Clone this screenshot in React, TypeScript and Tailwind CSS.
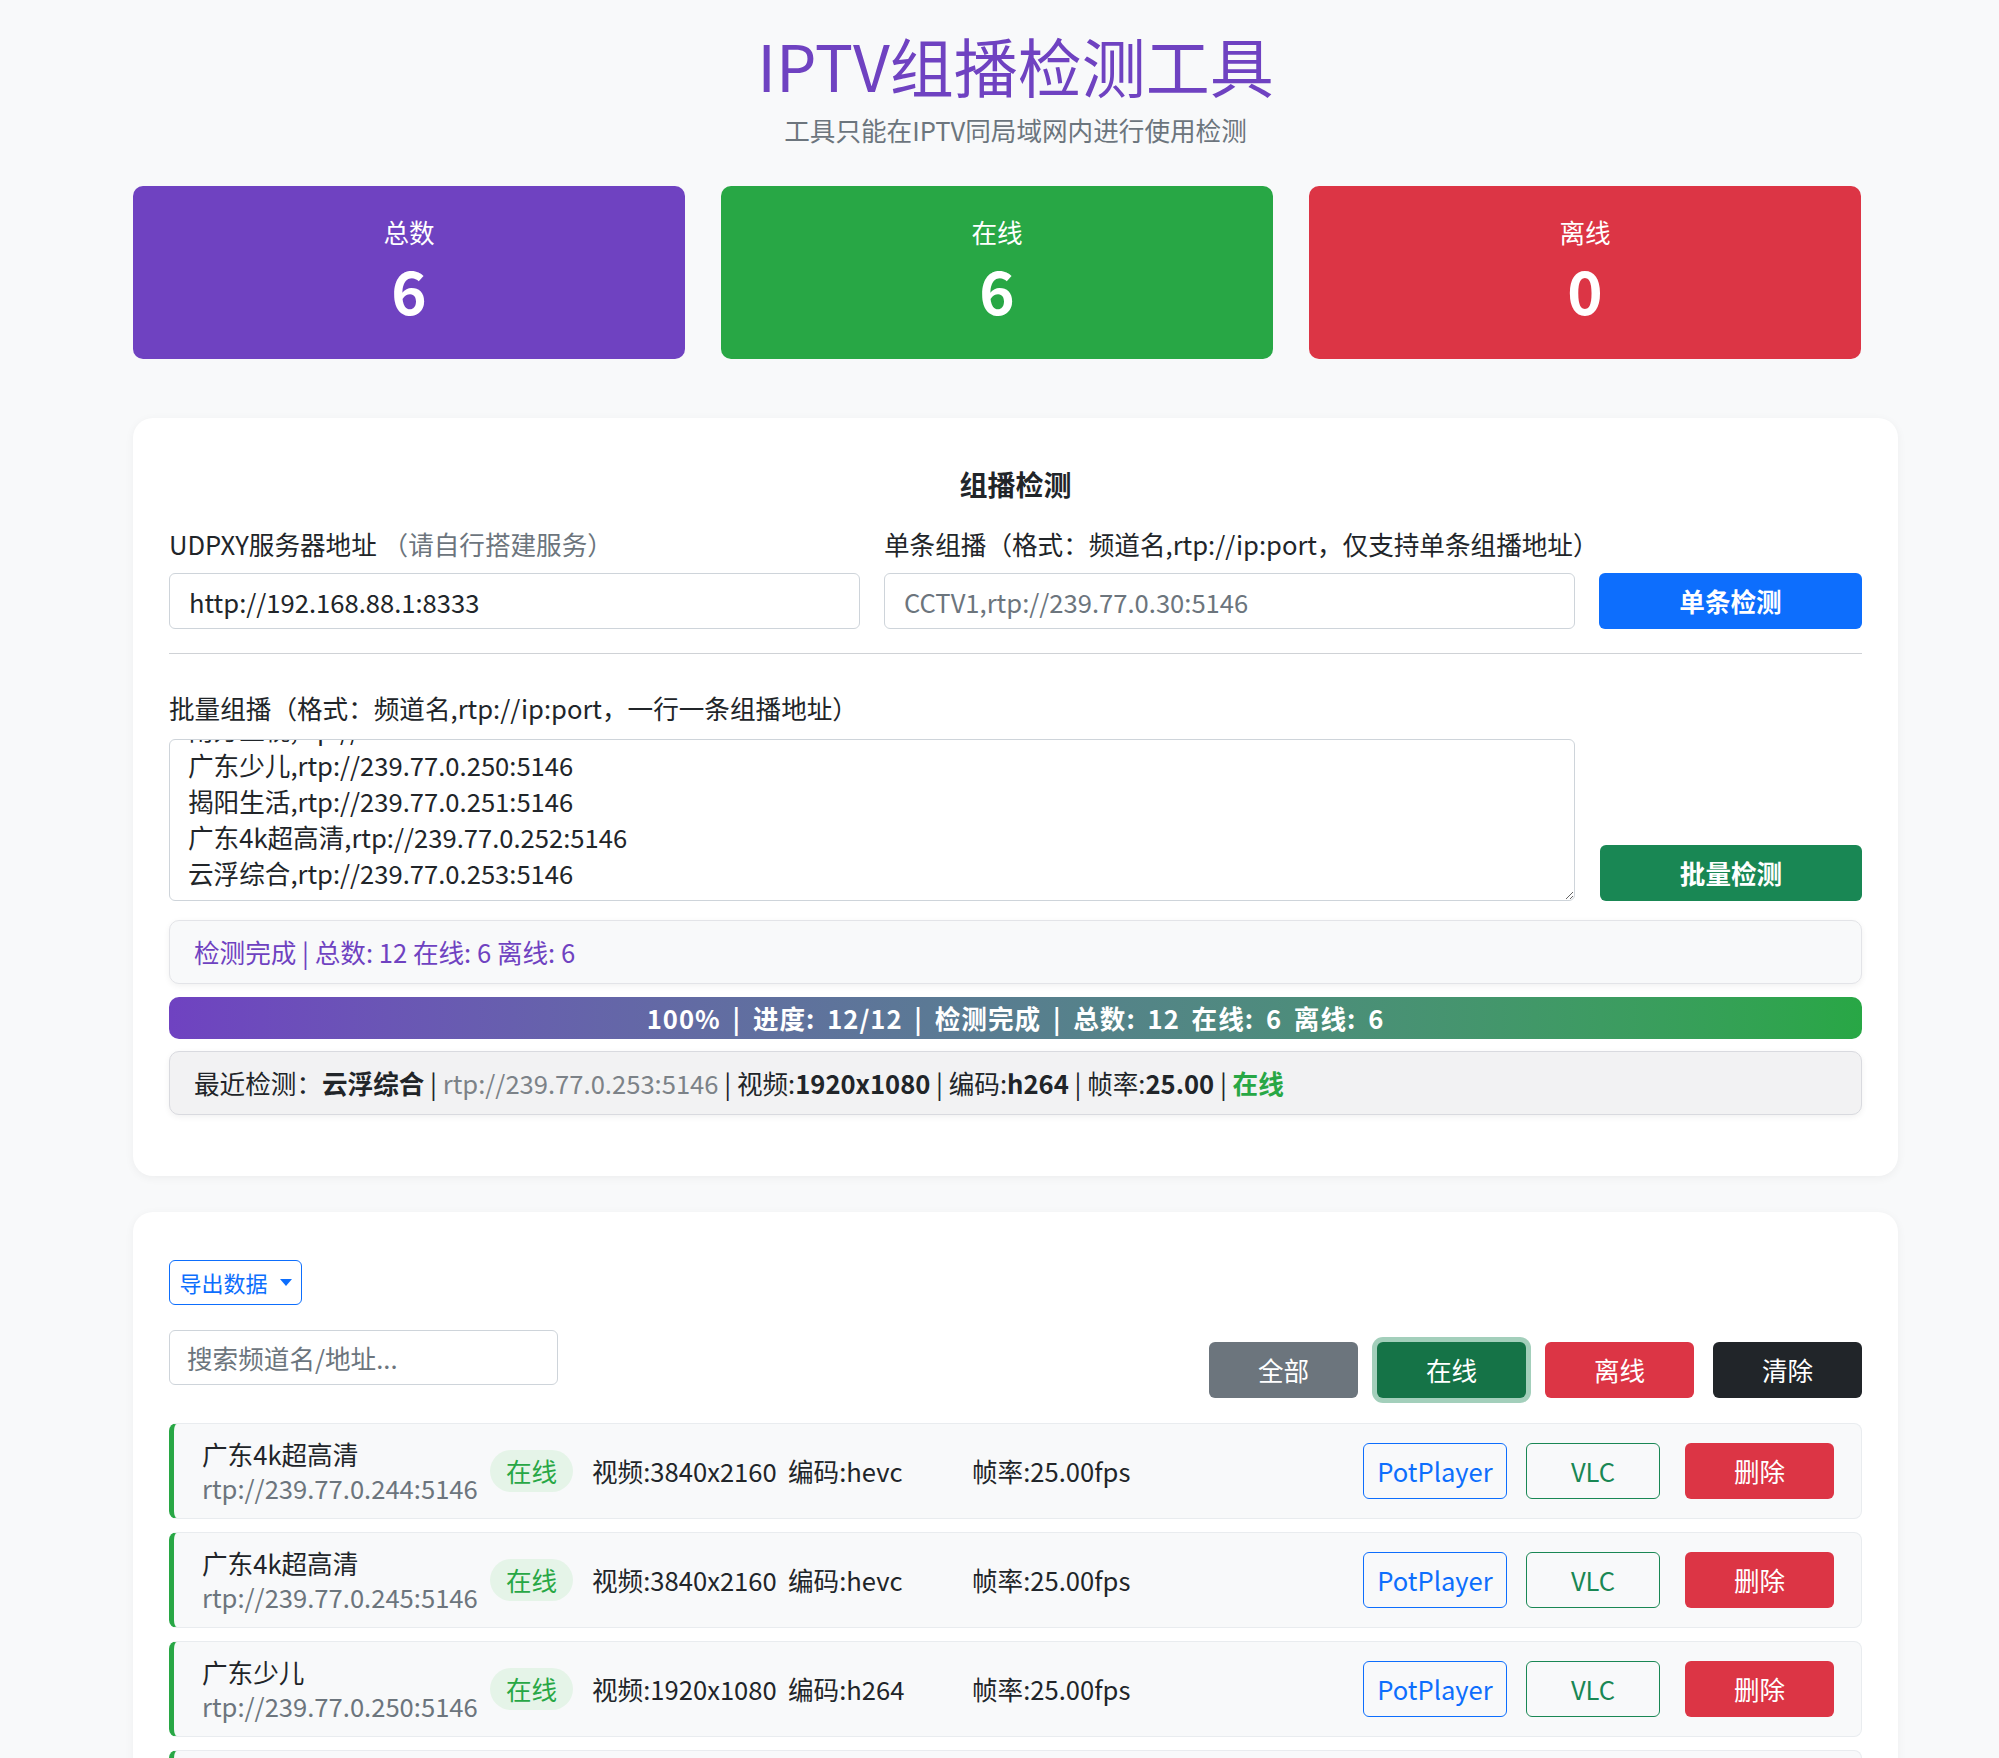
import { useEffect, useRef } from 'react'

const batchText = [
  '广东4k超高清,rtp://239.77.0.244:5146',
  '广东4k超高清,rtp://239.77.0.245:5146',
  '广东体育,rtp://239.77.0.246:5146',
  '广东珠江,rtp://239.77.0.247:5146',
  '广东新闻,rtp://239.77.0.248:5146',
  '嘉佳卡通,rtp://239.77.0.249:5146',
  '广东影视,rtp://239.77.0.240:5146',
  '南方卫视,rtp://239.77.0.241:5146',
  '广东少儿,rtp://239.77.0.250:5146',
  '揭阳生活,rtp://239.77.0.251:5146',
  '广东4k超高清,rtp://239.77.0.252:5146',
  '云浮综合,rtp://239.77.0.253:5146'
].join('\n')

const channels = [
  { name: '广东4k超高清', url: 'rtp://239.77.0.244:5146', res: '3840x2160', codec: 'hevc' },
  { name: '广东4k超高清', url: 'rtp://239.77.0.245:5146', res: '3840x2160', codec: 'hevc' },
  { name: '广东少儿', url: 'rtp://239.77.0.250:5146', res: '1920x1080', codec: 'h264' },
  { name: '揭阳生活', url: 'rtp://239.77.0.251:5146', res: '1920x1080', codec: 'h264' },
  { name: '广东4k超高清', url: 'rtp://239.77.0.252:5146', res: '3840x2160', codec: 'hevc' },
  { name: '云浮综合', url: 'rtp://239.77.0.253:5146', res: '1920x1080', codec: 'h264' }
]

const stats = [
  { label: '总数', value: 6, bg: 'bg-[#6f42c1]' },
  { label: '在线', value: 6, bg: 'bg-[#28a745]' },
  { label: '离线', value: 0, bg: 'bg-[#dc3545]' }
]

const StatCard = ({ label, value, bg }: { label: string; value: number; bg: string }) => (
  <div
    className={`${bg} h-[173px] rounded-[10px] flex flex-col items-center justify-center gap-[2px] pb-[8px] text-white`}
  >
    <div className="text-[25.6px] leading-[38px]">{label}</div>
    <div className="text-[60px] leading-[72px] font-bold">{value}</div>
  </div>
)

const ChannelRow = ({ ch }: { ch: (typeof channels)[number] }) => (
  <div className="h-[96px] shrink-0 flex items-center bg-[#f8f9fa] border border-[#e9ecef] border-l-[5px] border-l-[#28a745] rounded-[8px] pl-[28px] pr-[27px]">
    <div className="flex flex-col w-[266px]">
      <span className="text-[25.6px] leading-[34px] text-[#212529]">{ch.name}</span>
      <span className="text-[25.6px] leading-[34px] text-[#6c757d]">{ch.url}</span>
    </div>
    <span className="ml-[22px] w-[83px] h-[42px] rounded-[21px] bg-[#e5f4e8] text-[#28a745] text-[25.6px] flex items-center justify-center">
      在线
    </span>
    <span className="ml-[19px] w-[196px] text-[25.6px] text-[#212529]">视频:{ch.res}</span>
    <span className="w-[184px] text-[25.6px] text-[#212529]">编码:{ch.codec}</span>
    <span className="text-[25.6px] text-[#212529]">帧率:25.00fps</span>
    <div className="ml-auto flex items-center">
      <button className="w-[144px] h-[56px] rounded-[6px] border border-[#0d6efd] text-[#0d6efd] text-[25.6px]">
        PotPlayer
      </button>
      <button className="ml-[19px] w-[134px] h-[56px] rounded-[6px] border border-[#198754] text-[#198754] text-[25.6px]">
        VLC
      </button>
      <button className="ml-[25px] w-[149px] h-[56px] rounded-[6px] bg-[#dc3545] text-white text-[25.6px]">
        删除
      </button>
    </div>
  </div>
)

export default function App() {
  const areaRef = useRef<HTMLTextAreaElement>(null)

  useEffect(() => {
    if (areaRef.current) areaRef.current.scrollTop = areaRef.current.scrollHeight
  }, [])

  return (
    <div className="min-h-screen bg-[#f8f9fa] font-['Noto_Sans_CJK_SC','Noto_Sans',sans-serif] text-[#212529]">
      <div className="ml-[133px] w-[1765px] pt-[26px] pb-[40px]">
        <h1 className="text-center text-[64px] leading-[77px] font-normal text-[#6f42c1]">IPTV组播检测工具</h1>
        <p className="mt-[8px] text-center text-[25.6px] leading-[38px] text-[#6c757d]">
          工具只能在IPTV同局域网内进行使用检测
        </p>

        <div className="mt-[37px] w-[1728px] grid grid-cols-3 gap-[36px]">
          {stats.map((s) => (
            <StatCard key={s.label} {...s} />
          ))}
        </div>

        <section className="mt-[59px] bg-white rounded-[20px] shadow-[0_2px_10px_rgba(0,0,0,0.05)] px-[36px] pt-[48px] pb-[61px]">
          <h2 className="text-center text-[28px] leading-[36px] font-bold">组播检测</h2>

          <div className="mt-[23px] grid grid-cols-[691px_691px_1fr] gap-x-[24px]">
            <label className="text-[25.6px] leading-[38px] whitespace-nowrap">
              UDPXY服务器地址 <span className="text-[#6c757d]">（请自行搭建服务）</span>
            </label>
            <label className="text-[25.6px] leading-[38px] whitespace-nowrap">
              单条组播（格式：频道名,rtp://ip:port，仅支持单条组播地址）
            </label>
            <div />
            <input
              className="mt-[10px] h-[56px] border border-[#ced4da] rounded-[6px] px-[19px] text-[25.6px] outline-none"
              defaultValue="http://192.168.88.1:8333"
            />
            <input
              className="mt-[10px] h-[56px] border border-[#ced4da] rounded-[6px] px-[19px] text-[25.6px] outline-none placeholder:text-[#6c757d]"
              placeholder="CCTV1,rtp://239.77.0.30:5146"
            />
            <button className="mt-[10px] h-[56px] rounded-[6px] bg-[#0d6efd] text-white text-[25.6px] font-bold">
              单条检测
            </button>
          </div>

          <hr className="mt-[24px] border-t border-[#cfd2d6]" />

          <label className="block mt-[35px] text-[25.6px] leading-[38px]">
            批量组播（格式：频道名,rtp://ip:port，一行一条组播地址）
          </label>
          <div className="mt-[12px] flex items-end gap-[25px]">
            <textarea
              ref={areaRef}
              className="w-[1406px] h-[162px] border border-[#ced4da] rounded-[6px] px-[18px] py-[9px] text-[25.6px] leading-[36px] outline-none overflow-y-scroll"
              defaultValue={batchText}
            />
            <button className="flex-1 h-[56px] rounded-[6px] bg-[#198754] text-white text-[25.6px] font-bold">
              批量检测
            </button>
          </div>

          <div className="mt-[19px] h-[64px] flex items-center px-[24px] bg-[#f8f9fa] border border-[#e3e4e8] rounded-[10px] shadow-[0_2px_6px_rgba(0,0,0,0.06)] text-[25.6px] text-[#6f42c1]">
            检测完成 | 总数: 12 在线: 6 离线: 6
          </div>

          <div className="mt-[13px] h-[42px] rounded-[10px] bg-gradient-to-r from-[#6f42c1] to-[#28a745] flex items-center justify-center text-white text-[25.6px] font-bold tracking-[1px] [word-spacing:5px]">
            100% | 进度: 12/12 | 检测完成 | 总数: 12 在线: 6 离线: 6
          </div>

          <div className="mt-[12px] h-[64px] flex items-center px-[24px] bg-[#f2f2f3] border border-[#d9dadf] rounded-[10px] shadow-[0_2px_6px_rgba(0,0,0,0.06)] text-[25.6px] whitespace-pre">
            <span>最近检测：</span>
            <b>云浮综合</b>
            <span> | </span>
            <span className="text-[#7c8288]">rtp://239.77.0.253:5146</span>
            <span> | 视频:</span>
            <b>1920x1080</b>
            <span> | 编码:</span>
            <b>h264</b>
            <span> | 帧率:</span>
            <b>25.00</b>
            <span> | </span>
            <b className="text-[#28a745]">在线</b>
          </div>
        </section>

        <section className="mt-[36px] bg-white rounded-[20px] shadow-[0_2px_10px_rgba(0,0,0,0.05)] px-[36px] pt-[48px] pb-[40px]">
          <button className="h-[45px] w-[133px] rounded-[6px] border border-[#0d6efd] text-[#0d6efd] text-[22px] flex items-center justify-center gap-[12px]">
            导出数据
            <svg width="12" height="8" viewBox="0 0 12 8">
              <path d="M0 0 L12 0 L6 7 Z" fill="#0d6efd" />
            </svg>
          </button>

          <div className="mt-[25px] flex items-end justify-between">
            <input
              className="mb-[13px] w-[389px] h-[55px] border border-[#ced4da] rounded-[6px] px-[17px] text-[25.6px] outline-none placeholder:text-[#6c757d]"
              placeholder="搜索频道名/地址..."
            />
            <div className="flex items-center gap-[19px]">
              <button className="w-[149px] h-[56px] rounded-[6px] bg-[#6c757d] text-white text-[25.6px]">全部</button>
              <button className="w-[149px] h-[56px] rounded-[6px] bg-[#157347] text-white text-[25.6px] shadow-[0_0_0_5px_#a3cfbb]">
                在线
              </button>
              <button className="w-[149px] h-[56px] rounded-[6px] bg-[#dc3545] text-white text-[25.6px]">离线</button>
              <button className="w-[149px] h-[56px] rounded-[6px] bg-[#212529] text-white text-[25.6px]">清除</button>
            </div>
          </div>

          <div className="mt-[25px] flex flex-col gap-[13px]">
            {channels.map((ch) => (
              <ChannelRow key={ch.url} ch={ch} />
            ))}
          </div>
        </section>
      </div>
    </div>
  )
}
